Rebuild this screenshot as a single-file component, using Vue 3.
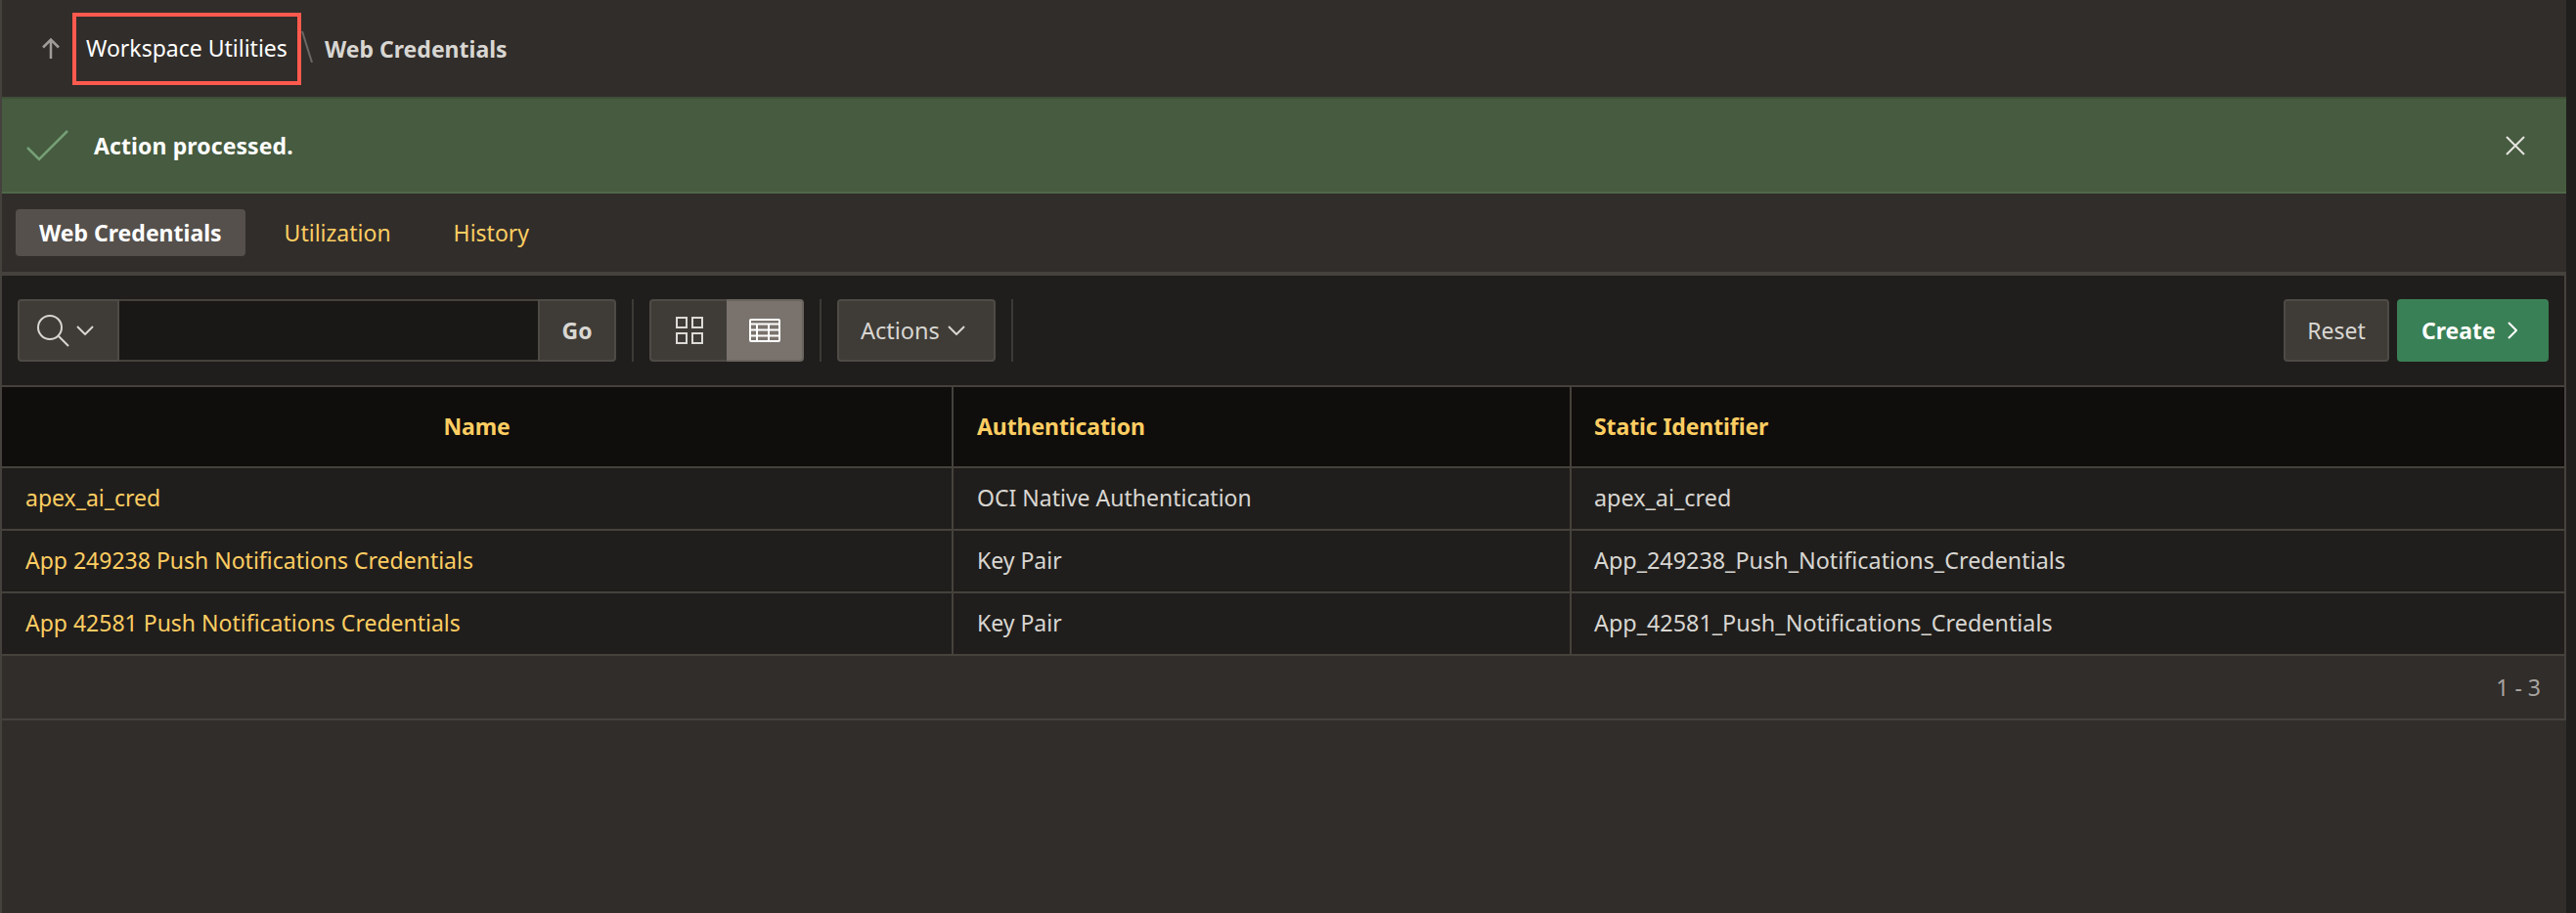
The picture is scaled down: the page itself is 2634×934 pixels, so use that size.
<script setup>
const rows = [
  { name: 'apex_ai_cred', auth: 'OCI Native Authentication', id: 'apex_ai_cred' },
  { name: 'App 249238 Push Notifications Credentials', auth: 'Key Pair', id: 'App_249238_Push_Notifications_Credentials' },
  { name: 'App 42581 Push Notifications Credentials', auth: 'Key Pair', id: 'App_42581_Push_Notifications_Credentials' },
]
</script>

<template>
  <div class="page">
    <header class="crumbs">
      <svg class="up" width="20" height="24" viewBox="0 0 20 24" fill="none" stroke="#a09c98" stroke-width="2.500">
        <path d="M10 22V3M2 10.500l8-8 8 8" />
      </svg>
      <a class="crumb-link">Workspace Utilities</a>
      <svg class="slash" width="12" height="32" viewBox="0 0 12 32" stroke="#6b6763" stroke-width="2">
        <path d="M1 0l10 32" />
      </svg>
      <span class="crumb-current">Web Credentials</span>
    </header>

    <section class="alert">
      <svg class="check" width="44" height="32" viewBox="0 0 44 32" fill="none" stroke="#76a077" stroke-width="2.500">
        <path d="M1 18l12 12L42 1" />
      </svg>
      <strong class="alert-text">Action processed.</strong>
      <svg class="close" width="20" height="20" viewBox="0 0 20 20" stroke="#e6e4e0" stroke-width="2">
        <path d="M1 1l18 18M19 1 1 19" />
      </svg>
    </section>

    <nav class="tabs">
      <a class="tab active">Web Credentials</a>
      <a class="tab">Utilization</a>
      <a class="tab">History</a>
    </nav>

    <section class="report">
      <div class="toolbar">
        <div class="search">
          <button class="search-btn">
            <svg width="33" height="33" viewBox="0 0 33 33" fill="none" stroke="#d8d6d2" stroke-width="2">
              <circle cx="13" cy="13" r="12" />
              <path d="M22 22l10 10" />
            </svg>
            <svg width="18" height="10" viewBox="0 0 18 10" fill="none" stroke="#d8d6d2" stroke-width="2">
              <path d="M1 1l8 8 8-8" />
            </svg>
          </button>
          <div class="search-input"></div>
          <button class="go">Go</button>
        </div>
        <i class="sep"></i>
        <div class="toggle">
          <button class="toggle-btn">
            <svg width="28" height="28" viewBox="0 0 28 28" fill="none" stroke="#dcdad6" stroke-width="2">
              <rect x="1" y="1" width="10" height="10" />
              <rect x="17" y="1" width="10" height="10" />
              <rect x="1" y="17" width="10" height="10" />
              <rect x="17" y="17" width="10" height="10" />
            </svg>
          </button>
          <button class="toggle-btn on">
            <svg width="32" height="24" viewBox="0 0 32 24" fill="none" stroke="#fff" stroke-width="2">
              <rect x="1" y="1" width="30" height="22" rx="1" />
              <path d="M1 5.500h30M1 11.500h30M1 17.500h30M8 6v17M20 6v17" />
            </svg>
          </button>
        </div>
        <i class="sep"></i>
        <button class="btn actions">
          Actions
          <svg width="18" height="10" viewBox="0 0 18 10" fill="none" stroke="#d8d6d2" stroke-width="2">
            <path d="M1 1l8 8 8-8" />
          </svg>
        </button>
        <i class="sep"></i>
        <div class="spacer"></div>
        <button class="btn reset">Reset</button>
        <button class="create">
          Create
          <svg width="10" height="18" viewBox="0 0 10 18" fill="none" stroke="#fff" stroke-width="2">
            <path d="M1 1l8 8-8 8" />
          </svg>
        </button>
      </div>

      <table class="grid">
        <colgroup>
          <col class="c1" />
          <col class="c2" />
          <col />
        </colgroup>
        <thead>
          <tr>
            <th class="center">Name</th>
            <th>Authentication</th>
            <th class="third">Static Identifier</th>
          </tr>
        </thead>
        <tbody>
          <tr v-for="r in rows" :key="r.id">
            <td><a class="link">{{ r.name }}</a></td>
            <td>{{ r.auth }}</td>
            <td class="third ident">{{ r.id }}</td>
          </tr>
        </tbody>
      </table>

      <div class="pager">1 - 3</div>
    </section>
  </div>
</template>

<style>
html, body { margin: 0; background: #201f1d; }
</style>

<style scoped>
.page {
  box-sizing: border-box;
  width: 2624px;
  height: 934px;
  background: #312d2a;
  border-left: 2px solid #45423e;
  font-family: "Noto Sans", "Open Sans", sans-serif;
  font-size: 23px;
  color: #d8d6d2;
  overflow: hidden;
}
button { font: inherit; border: 0; padding: 0; margin: 0; }
.crumbs {
  display: flex;
  align-items: center;
  height: 99px;
  box-sizing: border-box;
  padding-left: 40px;
}
.up { margin-right: 12px; }
.crumb-link {
  box-sizing: border-box;
  display: flex;
  align-items: center;
  width: 234px;
  height: 74px;
  padding: 0 0 2px 10px;
  border: 4px solid #ff5a4d;
  color: #fff;
  white-space: nowrap;
}
.slash { margin: 0 12px 4px 0; }
.crumb-current { font-weight: 700; color: #d8d6d2; }

.alert {
  display: flex;
  align-items: center;
  box-sizing: border-box;
  height: 99px;
  background: #465b3f;
  border-top: 2px solid #3f4f39;
  border-bottom: 2px solid #50694a;
  padding: 0 42px 0 25px;
}
.check { margin-right: 25px; }
.alert-text { color: #fff; flex: 1; font-weight: 700; letter-spacing: 0.1px; }

.tabs {
  display: flex;
  align-items: center;
  gap: 16px;
  height: 80px;
  padding: 0 0 0 14px;
  box-sizing: border-box;
}
.tab {
  display: flex;
  align-items: center;
  height: 48px;
  padding: 0 24px;
  border-radius: 4px;
  color: #fdcd62;
  white-space: nowrap;
}
.tab.active {
  background: #55504c;
  color: #fff;
  font-weight: 700;
}

.report {
  box-sizing: border-box;
  width: 2622px;
  border-top: 4px solid #45423e;
  border-right: 2px solid #45423e;
  background: #201e1c;
}
.toolbar {
  display: flex;
  align-items: center;
  height: 114px;
  padding: 0 16px;
  box-sizing: border-box;
  border-bottom: 2px solid #45423c;
}
.search { display: flex; width: 612px; height: 64px; }
.search-btn {
  display: flex;
  align-items: center;
  gap: 7px;
  width: 104px;
  padding-left: 18px;
  background: #3f3c37;
  border: 2px solid #4e4b46;
  border-radius: 4px 0 0 4px;
  box-sizing: border-box;
}
.search-input {
  flex: 1;
  background: #1a1816;
  border-top: 2px solid #45423c;
  border-bottom: 2px solid #45423c;
}
.go {
  width: 80px;
  background: #3f3c37;
  border: 2px solid #4e4b46;
  border-radius: 0 4px 4px 0;
  box-sizing: border-box;
  color: #d8d6d2;
  font-weight: 700;
}
.sep {
  width: 2px;
  height: 64px;
  margin: 0 16px;
  background: #3c3a36;
  flex: none;
}
.toggle { display: flex; width: 158px; height: 64px; }
.toggle-btn {
  flex: 1;
  display: flex;
  align-items: center;
  justify-content: center;
  background: #3f3c37;
  border: 2px solid #4e4b46;
  border-right: 0;
  border-radius: 4px 0 0 4px;
  box-sizing: border-box;
}
.toggle-btn.on {
  background: #7a736d;
  border: 2px solid #6a645f;
  border-left: 0;
  border-radius: 0 4px 4px 0;
}
.btn {
  height: 64px;
  background: #3f3c37;
  border: 2px solid #4e4b46;
  border-radius: 4px;
  box-sizing: border-box;
  color: #d8d6d2;
}
.actions {
  display: flex;
  align-items: center;
  gap: 8px;
  width: 162px;
  padding-left: 22px;
  font-size: 23.500px;
}
.spacer { flex: 1; }
.reset { width: 108px; margin-right: 8px; }
.create {
  display: flex;
  align-items: center;
  gap: 12px;
  width: 155px;
  height: 64px;
  padding-left: 25px;
  background: #3a8056;
  border-radius: 4px;
  color: #fff;
  font-weight: 700;
}

.grid {
  width: 100%;
  table-layout: fixed;
  border-collapse: collapse;
}
.c1 { width: 972px; }
.c2 { width: 632px; }
th, td {
  box-sizing: border-box;
  padding: 0 24px 2px;
  text-align: left;
  border-left: 2px solid #45423c;
  white-space: nowrap;
}
th:first-child, td:first-child { border-left: 0; }
th {
  height: 82px;
  background: #0f0e0c;
  color: #fdcd62;
  font-weight: 700;
  letter-spacing: -0.1px;
  border-bottom: 2px solid #45423c;
}
th.center { text-align: center; }
td {
  height: 64px;
  border-bottom: 2px solid #45423c;
}
.third { padding-left: 23px; }
td.ident { font-size: 23.350px; }
.link { color: #fdcd62; }
.pager {
  box-sizing: border-box;
  height: 66px;
  padding: 0 24px 0 0;
  display: flex;
  align-items: center;
  justify-content: flex-end;
  background: #312d2a;
  border-bottom: 2px solid #45423e;
  color: #a8a4a0;
}
</style>
